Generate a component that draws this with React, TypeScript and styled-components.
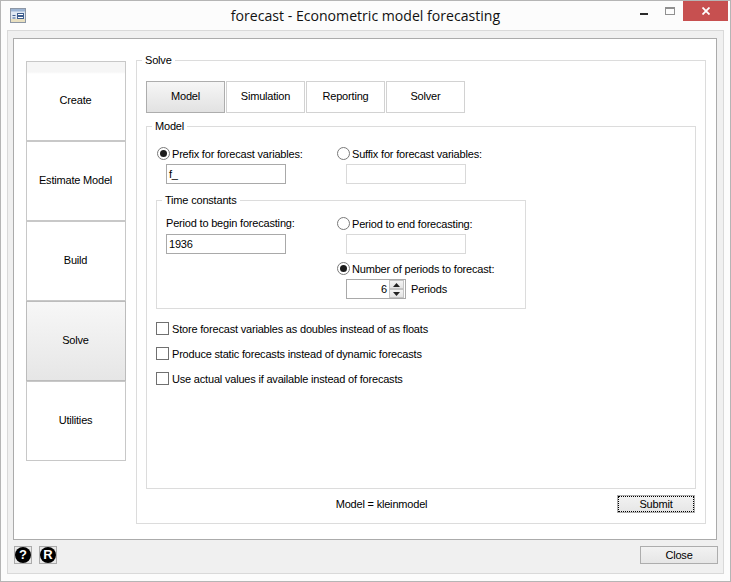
import React from "react";
import styled, { createGlobalStyle } from "styled-components";

const Global = createGlobalStyle`
  html, body { margin: 0; padding: 0; background: #fff; overflow: hidden; }
  * { box-sizing: border-box; }
  body { font-family: "Liberation Sans", Arial, sans-serif; font-size: 11px; letter-spacing: -0.19px; color: #000; }
`;

const Win = styled.div`
  width: 731px; height: 582px; border: 1px solid #b5b5b5; background: #fcfcfc;
  display: flex; flex-direction: column; padding: 0 6px 7px;
`;
const TitleBar = styled.header`
  height: 29px; flex: none; display: flex; align-items: flex-start; position: relative; margin: 0 -5px 0;
  padding-left: 8px;
`;
const AppIcon = styled.svg`margin-top: 7px; flex: none;`;
const TitleText = styled.div`
  position: absolute; left: 0; right: 0; top: 5px; text-align: center;
  font-family: "Open Sans", sans-serif; font-size: 14.1px; letter-spacing: 0; line-height: 20px; color: #111;
`;
const Controls = styled.div`margin-left: auto; margin-right: 1px; display: flex; align-items: flex-start; position: relative;`;
const Ctl = styled.div<{ $w: number; $close?: boolean }>`
  width: ${p => p.$w}px; height: 20px; display: flex; align-items: center; justify-content: center;
  background: ${p => (p.$close ? "#c75050" : "transparent")};
`;
const Pane = styled.div`
  flex: 1; display: flex; flex-direction: column; border: 1px solid #d9d9d9; background: #f0f0f0;
  padding: 7px 6px 0 5px; min-height: 0;
`;
const Panel = styled.main`
  height: 502px; flex: none; background: #fff; border: 1px solid #ababab;
  display: flex; padding: 14px 10px 0 12px; gap: 10px;
`;
const Nav = styled.nav`width: 100px; flex: none; display: flex; flex-direction: column; margin-top: 8px;`;
const NavBtn = styled.div<{ $active?: boolean; $band?: boolean }>`
  height: 80px; flex: none; display: flex; align-items: center; justify-content: center;
  border: 1px solid ${p => (p.$active ? "#bcbcbc" : "#c8c8c8")};
  padding: 0 1px 3px 0;
  background: ${p =>
    p.$active
      ? "linear-gradient(#f7f7f7, #e6e6e6)"
      : p.$band
      ? "linear-gradient(#f6f6f6 0, #f6f6f6 10px, #fff 12px)"
      : "#fff"};
`;
const Group = styled.fieldset`
  margin: 0; padding: 0; min-width: 0; border: 1px solid #dcdcdc;
`;
const Legend = styled.legend`
  margin-left: -4px; padding: 0 3px; line-height: 14px; height: 14px;
`;
const SolveGroup = styled(Group)`width: 570px; height: 471px; padding: 14px 9px 0;`;
const Tabs = styled.div`display: flex; gap: 1px;`;
const Tab = styled.div<{ $active?: boolean }>`
  width: 79px; height: 32px; display: flex; align-items: center; justify-content: center;
  padding-bottom: 3px;
  border: 1px solid ${p => (p.$active ? "#adadad" : "#d2d2d2")};
  background: ${p => (p.$active ? "linear-gradient(#f6f6f6, #e2e2e2)" : "#fff")};
`;
const ModelGroup = styled(Group)`margin-top: 6px; height: 370px; padding: 14px 9px 0;`;
const TwoCol = styled.div<{ $first: number }>`
  display: grid; grid-template-columns: ${p => p.$first}px 1fr;
`;
const Stack = styled.div`display: flex; flex-direction: column;`;
const OptionRow = styled.label`display: flex; align-items: center; height: 13px; white-space: nowrap;`;
const Radio = styled.span<{ $on?: boolean }>`
  width: 13px; height: 13px; flex: none; border-radius: 50%; border: 1px solid #7a7a7a;
  background: #fff; display: flex; align-items: center; justify-content: center; margin-right: 2px;
  &::after {
    content: ""; width: 7px; height: 7px; border-radius: 50%;
    background: ${p => (p.$on ? "#1c1c1c" : "transparent")};
  }
`;
const Indent = styled.div`margin-left: 1px;`;
const Field = styled.div<{ $off?: boolean }>`
  width: 120px; height: 20px; margin: 4px 0 0 9px; border: 1px solid ${p => (p.$off ? "#d9d9d9" : "#a9a9a9")};
  background: #fff; padding: 0 2px; line-height: 18px; white-space: pre;
`;
const TimeGroup = styled(Group)`width: 370px; margin-top: 9px; height: 116px; padding: 10px 9px 0;`;
const PlainLabel = styled.div`height: 13px; line-height: 13px; white-space: nowrap;`;
const FlushField = styled(Field)`margin-left: 0;`;
const OptionGap = styled.div`height: 8px;`;
const SpinRow = styled.div`display: flex; align-items: center; margin: 4px 0 0 9px; gap: 5px;`;
const Spin = styled.div`
  width: 60px; height: 20px; border: 1px solid #a9a9a9; display: flex; align-items: stretch; background: #fff;
`;
const SpinValue = styled.div`flex: 1; text-align: right; padding-right: 2px; line-height: 18px;`;
const SpinBtns = styled.div`width: 15px; margin-right: 1px; display: flex; flex-direction: column; gap: 0;`;
const SpinBtn = styled.div`
  flex: 1; display: flex; align-items: center; justify-content: center;
  background: linear-gradient(#f4f4f4, #e4e4e4); border: 1px solid #c4c4c4;
`;
const Checks = styled.div`margin-top: 13px; display: flex; flex-direction: column; gap: 12px;`;
const CheckBox = styled.span`
  width: 13px; height: 13px; flex: none; border: 1px solid #707070; background: #fff; margin-right: 3px;
`;
const Footer = styled.div`display: flex; align-items: center; margin-top: 6px; padding-right: 1px; height: 18px;`;
const FooterNote = styled.div`flex: 1; text-align: center;`;
const Btn = styled.button<{ $focus?: boolean }>`
  width: 78px; height: 18px; padding: 0; font: inherit; letter-spacing: inherit; color: #000; flex: none;
  border: 1px solid #adadad; background: linear-gradient(#f2f2f2, #e6e6e6);
  display: flex; align-items: center; justify-content: center;
  ${p => (p.$focus ? "outline: 1px dotted #000; outline-offset: -2px;" : "")}
`;
const Bottom = styled.footer`
  display: flex; align-items: flex-start; padding: 6px 0 0 1px; gap: 7px;
`;
const HelpBtn = styled.div`
  width: 18px; height: 18px; flex: none; border: 1px solid #ababab; background: #e8e8e8;
  display: flex; align-items: center; justify-content: center;
`;
const HelpDisc = styled.span`
  width: 16px; height: 16px; border-radius: 50%; background: #000; color: #fff;
  font: bold 13px/16px "Liberation Sans", sans-serif; letter-spacing: 0; text-align: center;
`;
const CloseBtn = styled(Btn)`margin-left: auto; margin-right: -1px;`;

const Arrow = ({ up }: { up?: boolean }) => (
  <svg width="7" height="4" viewBox="0 0 7 4">
    <path d={up ? "M3.5 0 L7 4 L0 4 Z" : "M0 0 L7 0 L3.5 4 Z"} fill="#222" />
  </svg>
);

export default function App() {
  return (
    <>
      <Global />
      <Win>
        <TitleBar>
          <AppIcon width="16" height="15" viewBox="0 0 16 15">
            <rect x="0.5" y="0.5" width="15" height="14" fill="#dfe8f2" stroke="#8d97a5" />
            <rect x="1" y="1" width="14" height="2.5" fill="#9cb4d3" />
            <rect x="1" y="11" width="14" height="3" fill="#e8dfc0" />
            <path d="M2.5 7.5h3M2.5 10h3" stroke="#3f5f8f" />
            <rect x="7.5" y="5.5" width="6" height="2" fill="#fff" stroke="#3f5f8f" />
            <rect x="7.5" y="8.5" width="6" height="2" fill="#fff" stroke="#3f5f8f" />
          </AppIcon>
          <TitleText>forecast - Econometric model forecasting</TitleText>
          <Controls>
            <Ctl $w={26}>
              <svg width="8" height="8" viewBox="0 0 8 8"><rect y="6" width="8" height="2" fill="#2a2a2a" /></svg>
            </Ctl>
            <Ctl $w={26}>
              <svg width="10" height="8" viewBox="0 0 10 8">
                <rect x="0.5" y="0.5" width="9" height="7" fill="none" stroke="#909090" />
                <rect x="0" y="0" width="10" height="2" fill="#909090" />
              </svg>
            </Ctl>
            <Ctl $w={45} $close>
              <svg width="8" height="8" viewBox="0 0 8 8">
                <path d="M0.5 0.5 L7.5 7.5 M7.5 0.5 L0.5 7.5" stroke="#fff" strokeWidth="1.8" />
              </svg>
            </Ctl>
          </Controls>
        </TitleBar>
        <Pane>
          <Panel>
            <Nav>
              <NavBtn $band>Create</NavBtn>
              <NavBtn>Estimate Model</NavBtn>
              <NavBtn>Build</NavBtn>
              <NavBtn $active>Solve</NavBtn>
              <NavBtn>Utilities</NavBtn>
            </Nav>
            <SolveGroup>
              <Legend>Solve</Legend>
              <Tabs>
                <Tab $active>Model</Tab>
                <Tab>Simulation</Tab>
                <Tab>Reporting</Tab>
                <Tab>Solver</Tab>
              </Tabs>
              <ModelGroup>
                <Legend>Model</Legend>
                <Indent>
                  <TwoCol $first={180}>
                    <Stack>
                      <OptionRow><Radio $on />Prefix for forecast variables:</OptionRow>
                      <Field>f_</Field>
                    </Stack>
                    <Stack>
                      <OptionRow><Radio />Suffix for forecast variables:</OptionRow>
                      <Field $off />
                    </Stack>
                  </TwoCol>
                </Indent>
                <TimeGroup>
                  <Legend>Time constants</Legend>
                  <TwoCol $first={171}>
                    <Stack>
                      <PlainLabel>Period to begin forecasting:</PlainLabel>
                      <FlushField>1936</FlushField>
                    </Stack>
                    <Stack>
                      <OptionRow><Radio />Period to end forecasting:</OptionRow>
                      <Field $off />
                      <OptionGap />
                      <OptionRow><Radio $on />Number of periods to forecast:</OptionRow>
                      <SpinRow>
                        <Spin>
                          <SpinValue>6</SpinValue>
                          <SpinBtns>
                            <SpinBtn><Arrow up /></SpinBtn>
                            <SpinBtn><Arrow /></SpinBtn>
                          </SpinBtns>
                        </Spin>
                        Periods
                      </SpinRow>
                    </Stack>
                  </TwoCol>
                </TimeGroup>
                <Checks>
                  <OptionRow><CheckBox />Store forecast variables as doubles instead of as floats</OptionRow>
                  <OptionRow><CheckBox />Produce static forecasts instead of dynamic forecasts</OptionRow>
                  <OptionRow><CheckBox />Use actual values if available instead of forecasts</OptionRow>
                </Checks>
              </ModelGroup>
              <Footer>
                <FooterNote>Model = kleinmodel</FooterNote>
                <Btn $focus>Submit</Btn>
              </Footer>
            </SolveGroup>
          </Panel>
          <Bottom>
            <HelpBtn><HelpDisc>?</HelpDisc></HelpBtn>
            <HelpBtn><HelpDisc>R</HelpDisc></HelpBtn>
            <CloseBtn>Close</CloseBtn>
          </Bottom>
        </Pane>
      </Win>
    </>
  );
}
